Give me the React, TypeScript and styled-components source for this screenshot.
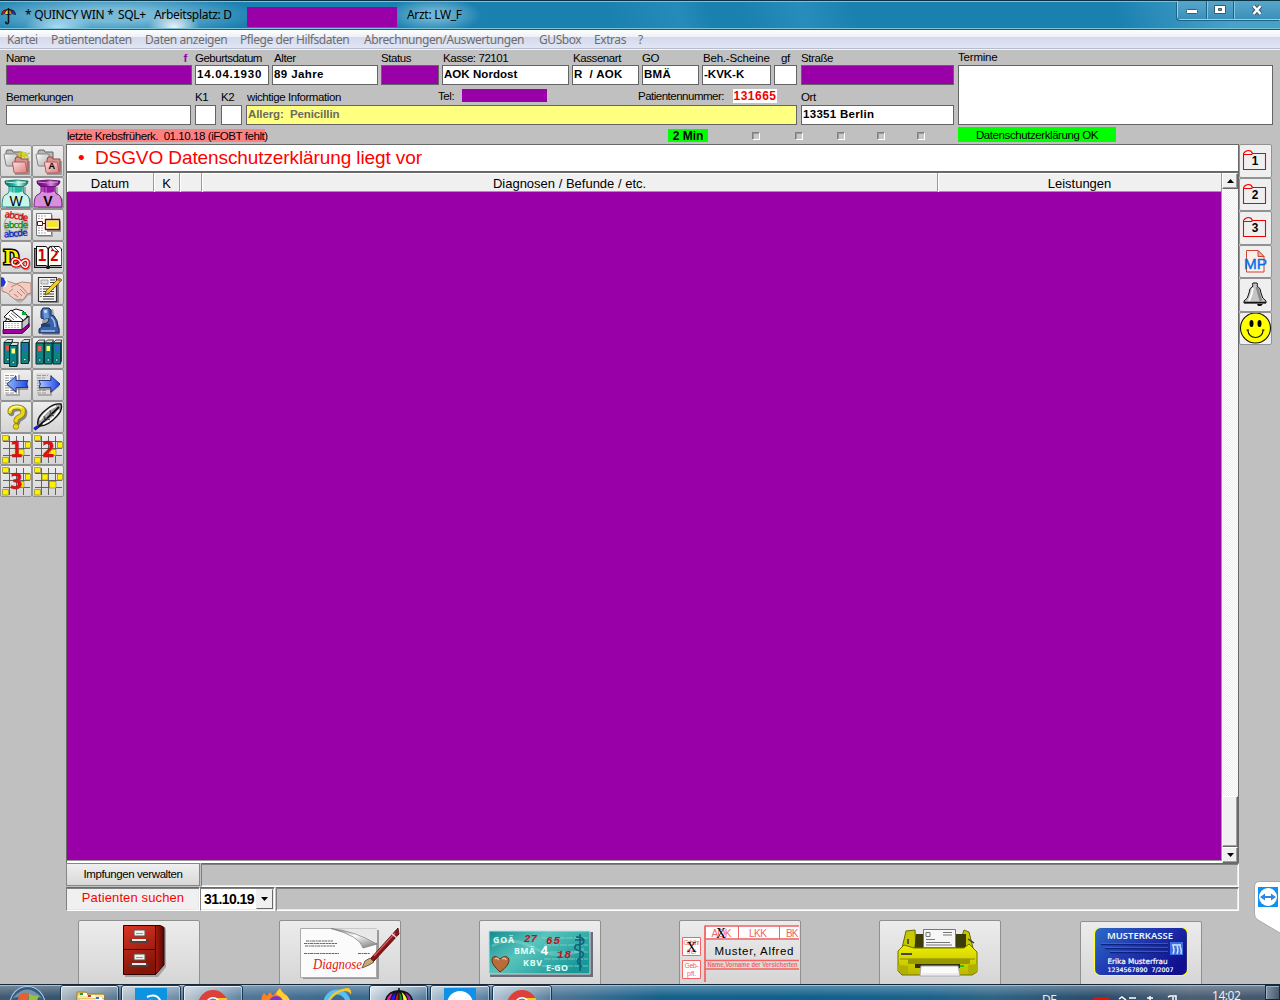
import React from "react";
import styled, { createGlobalStyle, css } from "styled-components";

const PURPLE = "#9900a8";
const SANS = `"Liberation Sans", Arial, sans-serif`;
const HUMAN = `"Noto Sans", "Open Sans", sans-serif`;

const Global = createGlobalStyle`
  *, *::before, *::after { box-sizing: border-box; }
  html, body { margin: 0; padding: 0; overflow: hidden; }
  body { font-family: ${SANS}; background: #c0c0c0; color: #000; }
  svg { display: block; }
`;

const Window = styled.div`
  position: relative;
  display: flex;
  flex-direction: column;
  width: 1280px;
  height: 1000px;
  overflow: hidden;
  background: #c0c0c0;
`;

/* ---------- title bar ---------- */
const TitleBar = styled.header`
  display: flex;
  align-items: flex-start;
  height: 30px;
  flex: none;
  border-top: 1px solid #0b3348;
  border-bottom: 1px solid #1c5a78;
  box-shadow: inset 0 1px 0 #7fc0dc, inset 0 -1px 0 #7cc3da;
  font: 12px/28px ${HUMAN};
  letter-spacing: -0.3px;
  background:
    radial-gradient(ellipse 26px 16px at 174px 26px, rgba(255,255,255,.9), rgba(255,255,255,0)),
    radial-gradient(ellipse 34px 16px at 58px 27px, rgba(190,235,255,.85), rgba(255,255,255,0)),
    radial-gradient(ellipse 150px 22px at 110px 14px, rgba(150,205,228,.75) 30%, rgba(150,205,228,0)),
    radial-gradient(ellipse 48px 18px at 434px 14px, rgba(150,205,228,.7) 20%, rgba(150,205,228,0)),
    linear-gradient(75deg, transparent 590px, rgba(60,160,205,.35) 660px, transparent 690px, transparent 720px, rgba(60,160,205,.4) 780px, transparent 830px, transparent 1080px, rgba(90,175,212,.7) 1190px),
    #1a80b0;
`;
const TitleText = styled.span<{ $w?: number }>`
  white-space: pre;
  width: ${(p) => (p.$w ? `${p.$w}px` : "auto")};
`;
const AppIcon = styled.div`
  width: 25px;
  padding: 6px 0 0 0;
`;
const TitleRedact = styled.div`
  width: 150px;
  height: 20px;
  margin: 6px 10px 0 0;
  background: ${PURPLE};
`;
const WindowButtons = styled.div`
  display: flex;
  margin-left: auto;
  height: 19px;
  border: 1px solid #9ad0e6;
  border-top: 0;
  border-right: 0;
  border-radius: 0 0 0 4px;
  box-shadow: -1px 1px 0 #1d6384;
`;
const WindowButton = styled.div<{ $w: number }>`
  display: flex;
  align-items: center;
  justify-content: center;
  width: ${(p) => p.$w}px;
  height: 18px;
  background: linear-gradient(#58a7ca, #3a90bb);
  & + & { border-left: 1px solid #1d6384; box-shadow: inset 1px 0 0 #86c3de; }
`;

/* ---------- menu ---------- */
const MenuBar = styled.nav`
  display: flex;
  flex: none;
  height: 20px;
  padding-left: 7px;
  border-bottom: 1px solid #f4f4f4;
  box-shadow: inset 0 -1px 0 #b6bccc;
  background: linear-gradient(#fff 0, #eef0f7 7px, #d3d9ec 7px, #e1e6f5 18px);
`;
const MenuItem = styled.span<{ $w: number }>`
  width: ${(p) => p.$w}px;
  font: 12px/20px ${HUMAN};
  letter-spacing: -0.43px;
  color: #6d6d6d;
  white-space: nowrap;
`;

/* ---------- patient header ---------- */
const PatientHeader = styled.section`
  display: flex;
  flex: none;
  height: 77px;
  padding-left: 6px;
`;
const PatientMain = styled.div`
  width: 952px;
`;
const FieldRow = styled.div<{ $gap: number }>`
  display: flex;
  gap: ${(p) => p.$gap}px;
`;
const FieldGroup = styled.div<{ $w: number; $ml?: number }>`
  width: ${(p) => p.$w}px;
  margin-left: ${(p) => p.$ml ?? 0}px;
`;
const Label = styled.div<{ $h?: number; $ls?: number; $pl?: number; $up?: number }>`
  display: flex;
  height: ${(p) => p.$h ?? 15}px;
  padding-left: ${(p) => p.$pl ?? 0}px;
  font-size: 11.5px;
  line-height: ${(p) => (p.$h ? p.$h + 4 : 16) - (p.$up ?? 0)}px;
  letter-spacing: ${(p) => p.$ls ?? -0.42}px;
  white-space: pre;
`;
const Sex = styled.b`
  margin-left: auto;
  padding-right: 5px;
  color: ${PURPLE};
`;
const Box = styled.div<{ $bg?: string; $h?: number; $ls?: number; $fg?: string }>`
  height: ${(p) => p.$h ?? 20}px;
  border: 1px solid #646464;
  padding-left: 1px;
  background: ${(p) => p.$bg ?? "#fff"};
  color: ${(p) => p.$fg ?? "#000"};
  font-size: 11.5px;
  font-weight: bold;
  line-height: 17px;
  letter-spacing: ${(p) => p.$ls ?? 0.3}px;
  white-space: pre;
`;
const PhoneRow = styled.div`
  display: flex;
  height: 20px;
  align-items: flex-start;
`;
const InlineRedact = styled.div`
  width: 85px;
  height: 13px;
  margin-top: 4px;
  background: ${PURPLE};
`;
const PatientNumber = styled.b`
  width: 44px;
  height: 14px;
  margin-top: 4px;
  background: #fff;
  color: #f00000;
  font-size: 12px;
  line-height: 14px;
  letter-spacing: 0.5px;
  text-align: center;
`;

/* ---------- status strip ---------- */
const StatusStrip = styled.section`
  display: flex;
  flex: none;
  height: 17px;
  padding-left: 67px;
`;
const Flag = styled.div<{ $w: number; $ml?: number; $h: number; $mt: number; $bg: string; $bold?: boolean; $ls?: number }>`
  width: ${(p) => p.$w}px;
  height: ${(p) => p.$h}px;
  margin: ${(p) => p.$mt}px 0 0 ${(p) => p.$ml ?? 0}px;
  background: ${(p) => p.$bg};
  font-size: ${(p) => (p.$bold ? 12 : 11.5)}px;
  font-weight: ${(p) => (p.$bold ? "bold" : "normal")};
  line-height: ${(p) => p.$h + 1}px;
  letter-spacing: ${(p) => p.$ls ?? 0}px;
  text-align: center;
  white-space: nowrap;
`;
const Checks = styled.div`
  display: flex;
  width: 250px;
  padding: 5px 0 0 44px;
`;
const Check = styled.i<{ $w: number }>`
  width: ${(p) => p.$w}px;
  &::before {
    content: "";
    display: block;
    width: 8px;
    height: 8px;
    border: 1px solid;
    border-color: #808080 #fff #fff #808080;
    box-shadow: inset 1px 1px 0 #9a9a9a;
    background: #c8c8c8;
  }
`;

/* ---------- workspace ---------- */
const Workspace = styled.main`
  display: flex;
  flex: none;
  height: 767px;
`;
const LeftTools = styled.aside`
  display: grid;
  grid-template-columns: 32px 32px;
  grid-auto-rows: 32px;
  align-content: start;
  width: 66px;
  padding-top: 1px;
`;
const Tool = styled.button<{ $right?: boolean }>`
  display: flex;
  align-items: center;
  justify-content: center;
  padding: 0;
  margin: 0;
  border: 1px solid #929292;
  border-radius: 2px;
  background: ${(p) => (p.$right ? "#efefef" : "linear-gradient(#ededed, #d5d5d5)")};
  overflow: hidden;
`;
const RightTools = styled.aside`
  display: grid;
  grid-template-columns: 33px;
  grid-auto-rows: 33.5px;
  align-content: start;
  width: 41px;
`;
const Center = styled.div`
  display: flex;
  flex-direction: column;
  width: 1173px;
`;
const Banner = styled.div`
  display: flex;
  flex: none;
  height: 29px;
  padding-left: 11px;
  border: 1px solid #696969;
  border-bottom-width: 2px;
  background: #fff;
  color: #f00;
  font-size: 19px;
  line-height: 25px;
  letter-spacing: -0.1px;
`;
const Bullet = styled.span`
  width: 17px;
`;
const TableFrame = styled.div`
  display: flex;
  flex: none;
  height: 690px;
  border-left: 1px solid #696969;
  border-right: 1px solid #696969;
`;
const Table = styled.div`
  display: flex;
  flex-direction: column;
  flex: 1;
`;
const HeadRow = styled.div`
  display: grid;
  grid-template-columns: 87px 26px 22px 736px 1fr;
  height: 19px;
  background: #f0f0f0;
  border-bottom: 1px solid #9a9a9a;
`;
const HeadCell = styled.div`
  border-right: 1px solid #9a9a9a;
  box-shadow: inset 1px 1px 0 #fff;
  font-size: 13px;
  line-height: 21px;
  text-align: center;
`;
const TableBody = styled.div`
  flex: 1;
  background: ${PURPLE};
  border-right: 1px solid #9a9a9a;
  border-bottom: 1px solid #9a9a9a;
`;
const TableFoot = styled.div`
  height: 2px;
  background: #fff;
`;
const ScrollBar = styled.div`
  display: flex;
  flex-direction: column;
  width: 16px;
  background: repeating-conic-gradient(#fff 0 25%, #ececec 0 50%) 0 0 / 2px 2px;
`;
const ScrollPiece = styled.div<{ $h: number; $mt?: string }>`
  display: flex;
  align-items: center;
  justify-content: center;
  height: ${(p) => p.$h}px;
  margin-top: ${(p) => p.$mt ?? 0};
  background: #f0f0f0;
  border: 1px solid;
  border-color: #fff #696969 #696969 #fff;
  box-shadow: inset -1px -1px 0 #a0a0a0;
`;
const FootRow = styled.div<{ $h: number }>`
  display: flex;
  flex: none;
  height: ${(p) => p.$h}px;
`;
const PlainButton = styled.button`
  width: 134px;
  height: 23px;
  padding: 0;
  border: 1px solid #868686;
  background: linear-gradient(#efefef, #d8d8d8);
  font: 11.5px/21px ${SANS};
  letter-spacing: -0.4px;
`;
const sunken = css`
  border: 1px solid;
  border-color: #696969 #fff #fff #808080;
  box-shadow: inset 0 1px 0 #808080, inset -1px -1px 0 #e8e8e8;
`;
const Well = styled.div`
  flex: 1;
  margin-left: 1px;
  background: #c0c0c0;
  ${sunken}
`;
const SearchCell = styled.div`
  width: 134px;
  background: #f0f0f0;
  color: #f00;
  font-size: 13px;
  line-height: 20px;
  letter-spacing: 0.12px;
  text-align: center;
  ${sunken}
`;
const DateCell = styled.div`
  display: flex;
  width: 75px;
  padding: 1px 1px 0 3px;
  background: #fff;
  font-size: 14px;
  font-weight: bold;
  line-height: 21px;
  letter-spacing: -0.55px;
  ${sunken}
`;
const DropArrow = styled.div`
  display: flex;
  align-items: center;
  justify-content: center;
  width: 17px;
  height: 20px;
  margin-left: auto;
  background: #f0f0f0;
  border: 1px solid;
  border-color: #eee #696969 #696969 #eee;
`;

/* ---------- picture buttons ---------- */
const PictureBar = styled.section`
  display: flex;
  flex: none;
  gap: 78px;
  height: 73px;
  padding: 9px 0 0 78px;
`;
const PictureButton = styled.button<{ $ml: number; $drop?: boolean }>`
  flex: none;
  width: 122px;
  height: 72px;
  padding: 0;
  margin: ${(p) => (p.$drop ? 1 : 0)}px 0 0 ${(p) => p.$ml}px;
  border: 1px solid #909090;
  border-radius: 2px;
  background: linear-gradient(#ececec, #d3d3d3);
  overflow: hidden;
`;

/* ---------- taskbar ---------- */
const TaskBar = styled.footer`
  position: relative;
  display: flex;
  flex: none;
  height: 16px;
  overflow: hidden;
  border-top: 1px solid #16293c;
  box-shadow: inset 0 1px 0 #a9bccd;
  background:
    linear-gradient(rgba(255,255,255,.3), rgba(255,255,255,0) 12px),
    linear-gradient(90deg, #405a72 0, #34556f 60px, #60819e 180px, #3a6a90 330px, #4c7596 560px, #15608a 660px, #10608c 800px, #1a628b 930px, #2f6485 990px, #2a4c6a 1100px, #4c5f75 1190px, #40566c 1280px);
`;
const StartSlot = styled.div`
  width: 60px;
  padding-left: 9px;
`;
const TaskButton = styled.div<{ $w: number; $flat?: boolean; $active?: boolean }>`
  display: flex;
  justify-content: center;
  width: ${(p) => p.$w}px;
  height: 24px;
  margin-right: 2px;
  ${(p) =>
    !p.$flat &&
    css`
      border: 1px solid #1c3850;
      border-radius: 3px;
      box-shadow: inset 0 1px 0 #e8f0f6, inset 1px 0 0 rgba(255, 255, 255, 0.6), inset -1px 0 0 rgba(255, 255, 255, 0.4);
      background: linear-gradient(125deg, rgba(255, 255, 255, ${p.$active ? 0.8 : 0.65}), rgba(200, 220, 235, 0.12) 90%);
    `}
`;
const Tray = styled.div`
  display: flex;
  margin-left: auto;
  color: #e8f0f6;
  font: 12px/14px ${HUMAN};
`;
const TrayText = styled.span<{ $mt: number; $w: number }>`
  width: ${(p) => p.$w}px;
  margin-top: ${(p) => p.$mt}px;
  letter-spacing: -0.45px;
`;
const ShowDesktop = styled.div`
  width: 15px;
  border: 1px solid #17293b;
  box-shadow: inset 1px 1px 0 #9fb1c2;
  background: linear-gradient(100deg, #8696a6, #44586c);
`;

/* remote-support tab that lies over the right screen edge */
const SupportTab = styled.div`
  position: absolute;
  right: 0;
  top: 881px;
`;

/* ---------- drawings ---------- */
const Svg = ({ w, h, children }: { w: number; h: number; children: React.ReactNode }) => (
  <svg width={w} height={h} viewBox={`0 0 ${w} ${h}`}>{children}</svg>
);

const Umbrella = () => (
  <svg width={17} height={18} viewBox="0 0 16 18">
    <path d="M.5 8Q1 2 8 2Q15 2 15.500 8L12 7 8 8 4 7Z" fill="#111" />
    <path d="M1.500 7Q2 3.500 5.500 3Q4 5 4 7Z" fill="#d01818" />
    <path d="M4.500 7Q5 3.500 7.500 3V7Z" fill="#f0e020" />
    <path d="M8.400 3Q11 3.500 11.200 7H8.400Z" fill="#e87810" />
    <path d="M10 3Q14.500 4 14.600 7H12Q12 4.500 10 3Z" fill="#2830d0" />
    <path d="M8 1V15Q7.800 17 6 16.500Q5 16 5.200 14.500" fill="none" stroke="#151515" strokeWidth="1.600" />
  </svg>
);

const Folders = ({ tag, yellow }: { tag: string; yellow?: boolean }) => (
  <Svg w={30} h={30}>
    <defs>
      <linearGradient id={`fg${tag}`} x2="1" y2="1"><stop offset="0" stopColor="#fff" /><stop offset="1" stopColor="#a8a8a8" /></linearGradient>
      <linearGradient id={`fr${tag}`} x2="1" y2="1"><stop offset="0" stopColor="#fde0e0" /><stop offset="1" stopColor="#dc7c7c" /></linearGradient>
    </defs>
    <path d="M5 6l1-2h5l1 2h8v13H6z" fill="#b8b8b8" stroke="#666" />
    <path d="M3 9q0-1 1-1h11q1 0 1 1l1 10q0 1-1 1H6q-1 0-1-1z" fill={`url(#fg${tag})`} stroke="#808080" />
    <path d="M14 28h14V15" stroke="#888" fill="none" strokeWidth="1.500" />
    <path d="M14 14l1-3h4l1 2h7v13H15z" fill="#d89090" stroke="#984848" />
    <path d="M11.500 17q0-1 1-1h11q1 0 1 1l1.500 9q0 1-1 1H14q-1 0-1-1z" fill={`url(#fr${tag})`} stroke="#b05858" />
    {yellow ? (
      <text x="17" y="10.500" fontSize="8" fontWeight="bold" fontFamily="Liberation Sans" fill="#eeee10" stroke="#8a8a00" strokeWidth=".3" transform="rotate(10 17 10)">{tag}</text>
    ) : (
      <text x="15.500" y="22.500" fontSize="9" fontWeight="bold" fontFamily="Liberation Sans">{tag}</text>
    )}
  </Svg>
);

const Flask = ({ c, dark, light, letter }: { c: string; dark: string; light: string; letter: string }) => (
  <Svg w={30} h={30}>
    <defs>
      <linearGradient id={`lip${letter}`}><stop offset="0" stopColor={dark} /><stop offset=".4" stopColor={c} /><stop offset=".6" stopColor={light} /><stop offset="1" stopColor={dark} /></linearGradient>
    </defs>
    <path d="M8 9L25 9V16L30 21V30H5V20L9 16Z" fill="#666" opacity=".5" />
    <path d="M8 8H22V13Q22 16 26 17Q29 19 29 29H1Q1 19 4 17Q8 16 8 13Z" fill={light} stroke={dark} strokeWidth=".8" />
    <path d="M8.500 8H21.500V13.500Q15 16 8.500 13.500Z" fill={c} />
    <path d="M4 3Q15 1 27 3Q27 7 22 8.500H8Q3 6 4 3Z" fill={`url(#lip${letter})`} stroke={dark} strokeWidth=".8" />
    <path d="M5 4Q15 6 25 4" fill="none" stroke={light} />
    <path d="M10 9v5M13 9v6" stroke={light} opacity=".7" />
    <text x="15" y="27.500" textAnchor="middle" fontSize={14} fontWeight={letter === "W" ? "normal" : "bold"} fontFamily="Liberation Sans">{letter}</text>
  </Svg>
);

const Abc = () => (
  <Svg w={30} h={30}>
    <circle cx="15" cy="15" r="12.500" fill="#b4b4ac" />
    <circle cx="13" cy="13" r="8.500" fill="#dcdcd6" />
    <g fontFamily="DejaVu Sans" fontSize="9" textAnchor="middle" strokeWidth=".25">
      <text x="15" y="9" fill="#d00000" stroke="#d00000" textLength="24" transform="rotate(10 15 9)">abcde</text>
      <text x="15" y="17.500" fill="#009000" stroke="#009000" textLength="24">abcde</text>
      <text x="15" y="26.500" fill="#0020c8" stroke="#0020c8" textLength="24" transform="rotate(-5 15 27)">abcde</text>
    </g>
  </Svg>
);

const FormLink = () => (
  <Svg w={30} h={30}>
    <path d="M5 5h15v22H5z" fill="#888" opacity=".6" />
    <path d="M3.500 3.500h15v22h-15z" fill="#fff" stroke="#777" />
    <path d="M5 6h8M5 8.500h5M5 18h7M5 20.500h6M5 23h8M12 18h3" stroke="#aaa" strokeDasharray="2 1" />
    <path d="M4.500 11.500h5v4h-5z" fill="#fff" stroke="#800000" />
    <path d="M9.500 13.500h3" stroke="#800000" />
    <path d="M14 11h14v11H14z" fill="#999" />
    <path d="M12.500 9.500h14v10h-14z" fill="#ffffc0" stroke="#700000" strokeWidth="1.300" />
    <path d="M14 11h11v6H14z" fill="#f4e820" />
  </Svg>
);

const DInf = () => (
  <Svg w={30} h={30}>
    <text x="3" y="21.500" fontSize="21" fontWeight="bold" fontFamily="Liberation Serif" fill="#fff000" stroke="#000" strokeWidth="3" paintOrder="stroke">D</text>
    <g fill="none" transform="rotate(8 20 21)">
      <path d="M20 21C17 16 11 17 11 21S17 26 20 21S27 16 27 21S23 26 20 21Z" stroke="#777" strokeWidth="4" transform="translate(1 1)" opacity=".6" />
      <path d="M20 21C17 16 11 17 11 21S17 26 20 21S27 16 27 21S23 26 20 21Z" stroke="#e00000" strokeWidth="3.600" />
      <path d="M20 21C17 16 11 17 11 21S17 26 20 21S27 16 27 21S23 26 20 21Z" stroke="#fff" strokeWidth="1.500" />
    </g>
  </Svg>
);

const Book = () => (
  <Svg w={30} h={30}>
    <path d="M1 6h2V4h10l2 2 2-2h9l3 3v19H17l-1 1h-2l-1-1H1z" fill="#111" />
    <path d="M4 5H13l1.500 2v17L13 23H4zM16 7l1.500-2H26l2 2v16H17.500L16 24z" fill="#fff" />
    <path d="M2.300 7v17.500h11M29 9v15.500H17" stroke="#ccc" fill="none" strokeWidth=".8" />
    <text x="4.500" y="18.500" fontSize="15" fontWeight="bold" fontFamily="DejaVu Sans Mono" fill="#d00000">1</text>
    <text x="17" y="18.500" fontSize="15" fontWeight="bold" fontFamily="DejaVu Sans Mono" fill="#d00000">2</text>
    <path d="M20 4l6 6-5-1-3-4z" fill="#fff" stroke="#111" strokeWidth=".8" />
  </Svg>
);

const Handshake = () => (
  <Svg w={30} h={30}>
    <path d="M1 17l4-1 10 10q4 2 7-2l5-5 3 1v-9H4z" fill="#777" opacity=".4" transform="translate(1 2)" />
    <path d="M1 8l5-1 9 3 6-2 9 1v10l-4 1-3 5q-2 2-4 0-2 2-4 0-2 1-4-2-2 0-3-3l-4-2-3-1z" fill="#f2cdc4" stroke="#a27468" strokeWidth=".8" />
    <path d="M10 13l6-3 5 3 5 6M13 20l4 3M16 17l5 5M19 15l5 5M8 18l4-3" stroke="#b58276" fill="none" />
    <path d="M0 3l3 1 2 4-2 4-3 1z" fill="#2038d0" />
    <path d="M4 5l2 3-2 5" fill="none" stroke="#fff" strokeWidth="1.500" />
  </Svg>
);

const Notes = () => (
  <Svg w={30} h={30}>
    <path d="M25 6v22H7" fill="none" stroke="#888" strokeWidth="2" />
    <path d="M5.500 3.500h18v24h-18z" fill="#f4f4f4" stroke="#333" strokeWidth="1.200" />
    <path d="M8 6h7v4H8z" fill="#ddd" stroke="#888" strokeWidth=".7" />
    <path d="M17 6h5M17 8.500h5M10 12.500h11M10 15h11M10 17.500h11M10 20h11M10 22.500h11M10 25h11" stroke="#444" />
    <path d="M7.500 12.500h1M7.500 15h1M7.500 17.500h1M7.500 20h1M7.500 22.500h1" stroke="#111" />
    <path d="M26 4l3 2-13 13-4 2 1-4z" fill="#f0d020" stroke="#554400" strokeWidth=".8" />
    <path d="M26 4l3 2-2 2-3-2z" fill="#b08040" />
  </Svg>
);

const CardBox = () => (
  <Svg w={30} h={30}>
    <path d="M4 16L10 5l5-2 7 2 4 4v9z" fill="#fff" stroke="#111" />
    <path d="M3 11l7-7 12 10-4 5z" fill="#fff" stroke="#111" />
    <path d="M8 9l5 5M10 7l6 5M7 12l4 3" stroke="#777" />
    <path d="M21 6h4v3h-4z" fill="#00b030" />
    <path d="M2.500 15.500H21L27 10v12l-6 5H2.500z" fill="#fff" stroke="#111" />
    <path d="M21 16v11l7-6V10z" fill="#c8c8c8" stroke="#111" />
    <path d="M2 23.500h19l7-6v3.500l-7 6.500H2z" fill="#a000a0" stroke="#300030" strokeWidth=".8" />
    <path d="M5 17v5M8 17v5M11 17v5M14 17v5M17 17v5" stroke="#888" strokeDasharray="1 1" />
  </Svg>
);

const Microscope = () => (
  <Svg w={30} h={30}>
    <path d="M11 4l8-2 2 10q5 6 5 12v4H8l3-7-3-6z" fill="#555" opacity=".45" transform="translate(1 1)" />
    <path d="M8 5l2-3h6l2 2v5l3 1q4 4 4 11l1 2v4H6v-4l3-2v-3l5-1 2-3-1-2-4 1-3-1z" fill="#3a62a8" stroke="#172d58" />
    <path d="M10 3h5l1 9-5 1z" fill="#6a96d8" />
    <path d="M18 11q4 3 4 10M8 25h14" stroke="#9fc0ee" fill="none" strokeWidth="1.500" />
    <path d="M8 18h9v3H8z" fill="#223f78" />
    <circle cx="12.500" cy="5.500" r="1.500" fill="#cfe0ff" />
  </Svg>
);

const Binder = ({ x, y = 5, tag }: { x: number; y?: number; tag: string }) => (
  <g transform={`translate(${x} ${y})`}>
    <path d="M0 3L3 0H9L7.500 3z" fill="#ddd" stroke="#222" strokeWidth=".8" />
    <path d="M0 3h7.500v21H0z" fill="#0c8484" stroke="#012c2c" />
    <path d="M7.500 3L9 0v21l-1.500 3z" fill="#045454" />
    <path d="M2 6h3.500v5H2z" fill={tag} />
    <circle cx="3.800" cy="20" r="1.300" fill="#c8e8e8" stroke="#012c2c" strokeWidth=".6" />
  </g>
);
const BindersOut = () => (
  <Svg w={30} h={30}>
    <Binder x={3} y={1.500} tag="#e85050" /><Binder x={20} y={1.500} tag="#3858e0" /><Binder x={8.500} y={4.500} tag="#ffff80" />
  </Svg>
);
const Binders = () => (
  <Svg w={30} h={30}>
    <Binder x={3} y={2} tag="#f06060" /><Binder x={11.500} y={2} tag="#ffff60" /><Binder x={20} y={2} tag="#3858e0" />
  </Svg>
);

const PageArrow = ({ right }: { right?: boolean }) => (
  <Svg w={30} h={30}>
    <path d="M5 5h14v21H5z" fill="#aaa" />
    <path d="M3 3h14v21H3z" fill={right ? "#dcdcdc" : "#fafafa"} />
    <path d="M4 5.500h11M4 8h8M4 10.500h11M4 13h6M4 15.500h10M4 18h5M4 20.500h10M4 23h9" stroke="#999" strokeDasharray="4 1" />
    <defs>
      <linearGradient id={right ? "ar" : "al"} x1="1" x2="0">
        <stop offset="0" stopColor={right ? "#b0ccf8" : "#2048e8"} />
        <stop offset="1" stopColor={right ? "#1840f0" : "#90b8f8"} />
      </linearGradient>
    </defs>
    <g transform={right ? "translate(33 0) scale(-1 1)" : ""}>
      <path d="M6 14L16 6v5H27v7H16v4z" fill="#555" opacity=".5" transform="translate(0 2)" />
      <path d="M6 14L15 6v4.500H27L25.500 14l1.500 3.500H15V22z" fill={`url(#${right ? "ar" : "al"})`} stroke="#182c80" strokeWidth=".9" />
    </g>
  </Svg>
);

const Question = () => (
  <Svg w={30} h={30}>
    <g fill="none" strokeLinecap="round">
      <path d="M9 10Q9 5 16 5T22 10Q22 13 18 15Q15 16.500 15 19" stroke="#888" strokeWidth="5.500" transform="translate(1.500 1.500)" />
      <path d="M9 10Q9 5 16 5T22 10Q22 13 18 15Q15 16.500 15 19" stroke="#8a7c00" strokeWidth="5" />
      <path d="M9 10Q9 5 16 5T22 10Q22 13 18 15Q15 16.500 15 19" stroke="#e8d818" strokeWidth="3.600" />
      <path d="M9 8.500Q11 4.500 16 4.500T20 6" stroke="#ffff98" strokeWidth="1.300" />
    </g>
    <circle cx="15" cy="24.500" r="2.800" fill="#e8d818" stroke="#8a7c00" strokeWidth=".8" />
  </Svg>
);

const Feather = () => (
  <Svg w={30} h={30}>
    <path d="M5 23Q3 15 14 7Q21 1 28 2Q30 8 24 14Q15 24 7 24L2 28" fill="#a8a8a8" stroke="#111" strokeWidth="1.400" />
    <path d="M5 25L26 5" stroke="#111" strokeWidth="1.800" />
    <path d="M7 18Q13 8 23 4M10 22Q20 18 26 8" stroke="#fff" fill="none" strokeWidth="1.800" />
    <path d="M12 16l5 2M16 12l5 2M12 19l-1-5M18 13l-1-5" stroke="#444" />
    <path d="M1 27l4-3" stroke="#1020e0" strokeWidth="2.500" />
  </Svg>
);

const Grid = ({ n }: { n?: string }) => (
  <Svg w={30} h={30}>
    <path d="M2 7.500h27M2 14.500h27M2 21.500h27M8.500 2v27M15.500 2v27M22.500 2v27" stroke="#555" strokeWidth=".9" />
    <g fill="#fff000" stroke="#8a8a40" strokeWidth=".7">
      <path d="M1.500 1.500h6v5h-6zM24.500 8h5v6h-5zM1.500 23.500h6v5.500h-6z" />
      {n ? <path d="M17 15.500h6v6h-6z" /> : <path d="M9 8h6v6H9zM16.500 15.500h6.500v6.500h-6.500z" />}
    </g>
    {n && <text x="15.500" y="22.500" textAnchor="middle" fontSize="21" fontWeight="bold" fontFamily="DejaVu Sans, Noto Sans" fill="#e01010" stroke="#902020" strokeWidth=".3" textLength="13" lengthAdjust="spacingAndGlyphs">{n}</text>}
  </Svg>
);

const NumFolder = ({ n }: { n: string }) => (
  <Svg w={31} h={31}>
    <path d="M3.500 8.500V24.500H25.500V8.500H12.500Q11.500 5.500 8.500 5.500T3.500 8.500M3.500 9.500H11.500L12.500 8.500" fill="none" stroke="#f00000" strokeWidth="1.100" />
    <text x="15" y="20" textAnchor="middle" fontSize="13.500" fontWeight="bold" fontFamily="Liberation Sans" textLength="6.600" lengthAdjust="spacingAndGlyphs">{n}</text>
  </Svg>
);
const MpDoc = () => (
  <Svg w={31} h={31}>
    <path d="M6.500 4.500H18l6 6V26H6.500z" fill="#fdeeea" stroke="#c84830" />
    <path d="M18 4.500v6h6z" fill="#f0b0a0" stroke="#c84830" />
    <text x="4" y="22.500" fontSize="15.500" fontFamily="Liberation Sans" fill="#0070e8" stroke="#0070e8" strokeWidth=".4" textLength="23" lengthAdjust="spacingAndGlyphs">MP</text>
  </Svg>
);
const Bell = () => (
  <Svg w={31} h={31}>
    <path d="M13 7q-1-2 0-3h4q1 1 0 3 4 2 4 7 1 6 5 8v2H4v-2q4-2 5-8 0-5 4-7z" fill="#c4c4c4" stroke="#111" />
    <path d="M13 9q-1 7-4 13" stroke="#fff" strokeWidth="1.800" fill="none" />
    <path d="M17 8q2 8 4 14" stroke="#888" strokeWidth="2.500" fill="none" />
    <path d="M4 23.500h22" stroke="#111" strokeWidth="1.300" />
    <path d="M17 25h6l-2 2h-3z" fill="#111" />
  </Svg>
);
const Smiley = () => (
  <Svg w={31} h={32}>
    <circle cx="15.500" cy="16" r="15" fill="#ffff00" stroke="#111" strokeWidth="1.100" />
    <ellipse cx="11.500" cy="11.500" rx="2" ry="3.500" /><ellipse cx="19.500" cy="11.500" rx="2" ry="3.500" />
    <path d="M6.500 18h2.500M22 18h2.500M7.800 18.500Q9 25.500 15.500 25.500T23.200 18.500" fill="none" stroke="#111" strokeWidth="1.200" />
  </Svg>
);

/* picture button drawings, 120x70 canvas */
const Cabinet = () => (
  <Svg w={120} h={70}>
    <defs>
      <linearGradient id="cab" x2=".3" y2="1"><stop offset="0" stopColor="#dc3424" /><stop offset="1" stopColor="#841408" /></linearGradient>
      <linearGradient id="cabs"><stop offset="0" stopColor="#a81c10" /><stop offset="1" stopColor="#500804" /></linearGradient>
    </defs>
    <path d="M46 6h40l1 3v37L79 56H46z" fill="#777" opacity=".55" />
    <path d="M44.500 4.500h32v49h-32z" fill="url(#cab)" stroke="#300" />
    <path d="M76.500 4.500h5l3.500 2V44l-8.500 9.500z" fill="url(#cabs)" stroke="#300" />
    <path d="M44 28.500h33" stroke="#300" />
    {[9, 33].map((y) => (
      <g key={y}>
        <path d={`M55 ${y}h11v6H55z`} fill="#f4f0ec" stroke="#555" />
        <path d={`M57 ${y + 3.500}h7`} stroke="#999" />
        <path d={`M52 ${y + 11}h16`} stroke="#444" strokeWidth="3.500" strokeLinecap="round" />
        <path d={`M53 ${y + 10}h14`} stroke="#eee" strokeWidth="2" />
      </g>
    ))}
  </Svg>
);
const Diagnose = () => (
  <Svg w={120} h={70}>
    <defs><linearGradient id="curl" x2=".6" y2="1"><stop offset="0" stopColor="#777" /><stop offset=".5" stopColor="#fff" /><stop offset="1" stopColor="#999" /></linearGradient></defs>
    <path d="M23 9h76v49H23z" fill="#888" opacity=".8" />
    <path d="M20.500 7.500h76v49h-76z" fill="#fbfbfb" stroke="#aaa" />
    <path d="M51 7.500Q78 10 97 22v-14.500z" fill="#e8e8e8" />
    <path d="M51 7.500Q75 10 97 23L83 27Q80 15 51 7.500z" fill="url(#curl)" stroke="#777" strokeWidth=".7" />
    <g stroke="#666" strokeWidth="1" strokeDasharray="3 .6 2 .5">
      <path d="M26 20h27M24 22.500h33M25 25h30M24 32.500h35M78 32.500h12" />
    </g>
    <text x="33" y="48" fontFamily="Liberation Serif" fontStyle="italic" fontSize="15.500" fill="#e01818" textLength="49" lengthAdjust="spacingAndGlyphs">Diagnose</text>
    <path d="M118 7l1 6-25 27-5 3 2-6z" fill="#8c1418" stroke="#400" strokeWidth=".8" />
    <path d="M115 12L94 35" stroke="#d46060" strokeWidth="1.200" />
    <path d="M82 47l3-7 5-3 4 4-5 3z" fill="#c8a878" stroke="#5a4028" strokeWidth=".8" />
    <path d="M111 12l6 5" stroke="#ddd" strokeWidth="1.500" />
  </Svg>
);
const FeeCatalog = () => (
  <Svg w={120} h={70}>
    <defs>
      <linearGradient id="fee" x2="1" y2=".6"><stop offset="0" stopColor="#128c90" /><stop offset=".45" stopColor="#58c4bc" /><stop offset="1" stopColor="#189898" /></linearGradient>
    </defs>
    <path d="M10 11h103v45H10z" fill="#6c6c78" />
    <path d="M9 10h101v43H9z" fill="url(#fee)" stroke="#bde0e0" />
    <path d="M62 17h46M64 24h44M62 31h46M64 38h44M62 45h46" stroke="#8cdcd4" opacity=".7" strokeDasharray="7 1" />
    <path d="M12 25Q30 14 54 27T104 28" stroke="#a8e4dc" strokeWidth="3" opacity=".3" fill="none" />
    <g fontFamily="Noto Sans, Open Sans" fontWeight="700" fontSize="8.800" fill="#e0fff4">
      <text x="13" y="21.500" textLength="21">GOÄ</text><text x="34" y="32.500" textLength="21">BMÄ</text>
      <text x="43" y="44.500" textLength="19">KBV</text><text x="66" y="49.500" textLength="22">E-GO</text>
    </g>
    <g fontFamily="Liberation Mono" fontWeight="bold" fontStyle="italic" fontSize="11" fill="#c01020">
      <text x="44" y="21" textLength="13">27</text><text x="66" y="23" textLength="14">65</text><text x="77" y="37" textLength="14">18</text>
    </g>
    <text x="60.500" y="34" fontSize="13" fontWeight="bold" fontFamily="Liberation Mono" fill="#fff">4</text>
    <path d="M20 51Q11 43 12 38Q14 33 20 38Q26 33 29 38Q30 44 20 51Z" fill="#b86c3c" stroke="#683010" />
    <path d="M15 38q2-2 4 1M22 38q3-2 4 1" stroke="#f0b888" fill="none" strokeWidth="1.500" />
    <path d="M100 13V50M96 16q8 0 8 4t-8 4q-4 4 4 6 6 2 2 6-6 2-4 6l4 4M95 19h9" stroke="#106078" fill="none" strokeWidth="1.600" />
  </Svg>
);
const Form = () => (
  <Svg w={120} h={70}>
    <path d="M26 6h32v11H26zM59 6h40v11H59zM100 6h19v11H100z" fill="#fff" />
    <path d="M25 5h94M25 18h94M25 39.500h94M25 48h94" stroke="#f46464" strokeWidth="1.500" />
    <path d="M25 4.500V61" stroke="#f46464" strokeWidth="1.800" />
    <path d="M58.500 5v13M99.500 5v13" stroke="#f46464" />
    <path d="M2.500 16.500h18v18h-18zM2.500 39.500h18v18h-18z" fill="#fff" stroke="#f46464" />
    <g fontFamily="Liberation Sans" fill="#f46464" fontSize="10">
      <text x="31.500" y="15.500" textLength="20">AOK</text><text x="69" y="15.500" textLength="18">LKK</text><text x="106" y="15.500" textLength="12.500">BK</text>
      <text x="3.500" y="23.500" fontSize="6.500" textLength="16">Gebühr</text><text x="7" y="32.500" fontSize="6.500">frei</text>
      <text x="4.500" y="47" fontSize="7" textLength="14">Geb-</text><text x="7" y="55" fontSize="7">pfl.</text>
      <text x="27.500" y="46" fontSize="6.500" fontWeight="bold" textLength="90" lengthAdjust="spacingAndGlyphs">Name,Vorname der Versicherten</text>
    </g>
    <g fontFamily="Liberation Serif" fontSize="14"><text x="36" y="16.500">X</text><text x="6.500" y="30.500">X</text></g>
    <text x="34.500" y="34" fontFamily="Liberation Sans" fontSize="11.500" textLength="79">Muster, Alfred</text>
  </Svg>
);
const Printer = () => (
  <Svg w={120} h={70}>
    <defs><linearGradient id="prn" x2="0" y2="1"><stop offset="0" stopColor="#f0f000" /><stop offset="1" stopColor="#b8b800" /></linearGradient></defs>
    <path d="M26 10l9-1 1 18H22zM84 9l5 2 4 16H78z" fill="#c8c800" stroke="#686800" />
    <path d="M36 13h50v18H34z" fill="#3c3c08" />
    <path d="M18 30l6-6 10 3h50l5-4 8 8v20l-5 3H22l-4-4z" fill="url(#prn)" stroke="#707000" />
    <path d="M20 38h75" stroke="#888800" /><path d="M28 38h62v5H28z" fill="#989800" />
    <path d="M35 43h45v4H35z" fill="#333300" /><path d="M80 44h4v2h-4z" fill="#20c020" />
    <path d="M18 44l10 1v8H22l-4-3zM88 44l9-1v8l-5 2h-4z" fill="#b0b000" />
    <path d="M21 33h11" stroke="#444" strokeWidth="2" />
    <path d="M43.500 8.500h32v18h-32z" fill="#f6f6f6" stroke="#777" />
    <path d="M46 11.500h4v4h-4zM63 11.500h9M63 14h9M46 18.500h9M46 21.500h24M46 24h26" stroke="#777" fill="none" />
    <path d="M41 45h37l2 10H40z" fill="#fafafa" stroke="#aaa" />
    <path d="M42 53h37" stroke="#ddd" />
    <path d="M28 18v5M88 18l6 4" stroke="#333" strokeWidth="1.500" />
  </Svg>
);
const InsuranceCard = () => (
  <Svg w={120} h={70}>
    <defs><linearGradient id="card" x2="1" y2=".6"><stop offset="0" stopColor="#2c6cc8" /><stop offset=".5" stopColor="#2038b0" /><stop offset="1" stopColor="#101090" /></linearGradient></defs>
    <rect x="13.500" y="5.500" width="93" height="48" rx="6" fill="url(#card)" stroke="#ffff30" strokeWidth="1.200" />
    <text x="26" y="17" fontFamily="Noto Sans, Open Sans" fontSize="9.500" fontWeight="600" fill="#e8f8ff" textLength="66" lengthAdjust="spacingAndGlyphs">MUSTERKASSE</text>
    <path d="M20 22.500h67M24 26.500h63M29 30.500h58" stroke="#0c2080" strokeWidth="1.500" />
    <path d="M20 21.500h67M24 25.500h63M29 29.500h58" stroke="#5088e0" strokeWidth=".5" />
    <path d="M89 20h13v13H89z" fill="#4070e0" />
    <path d="M91 23h9M92 24q2 4 0 8M96 24q2 4 0 8M99 24q2 4 1 8" stroke="#d8ecff" fill="none" strokeWidth="1.300" />
    <text x="26.500" y="42" fontFamily="DejaVu Sans, Noto Sans" fontSize="7.500" fill="#fff" stroke="#fff" strokeWidth=".2" textLength="60" lengthAdjust="spacingAndGlyphs">Erika Musterfrau</text>
    <text x="26.500" y="50" fontFamily="DejaVu Sans, Noto Sans" fontSize="6.200" fill="#fff" stroke="#fff" strokeWidth=".2" textLength="66" lengthAdjust="spacingAndGlyphs" xmlSpace="preserve">1234567890  7/2007</text>
  </Svg>
);

/* taskbar drawings */
const StartOrb = () => (
  <Svg w={38} h={30}>
    <circle cx="18.500" cy="19" r="17.500" fill="#345c80" stroke="#a8c8dc" strokeWidth="1.200" />
    <path d="M4 13Q18-4 33 13Q18 9 4 13Z" fill="#a0b8cc" opacity=".6" />
    <path d="M10 10q5-4 10-1l-2 9H8z" fill="#e86030" /><path d="M20 9q6 3 10 1l-3 9h-8z" fill="#98c040" />
  </Svg>
);
const Explorer = () => (
  <Svg w={36} h={22}>
    <path d="M5 6h9l1 2h17v15H4z" fill="#e8c868" stroke="#9c7828" strokeWidth=".8" />
    <path d="M6 9h26v3H6zM8 13h24v8H8z" fill="#f8e8a0" />
    <path d="M9 7h6v3H9zM17 9h6v3h-6zM24 11h6v3h-6z" fill="#fff" />
    <path d="M8 7h3v2H8z" fill="#20a020" /><path d="M16 9h3v2h-3z" fill="#d03030" /><path d="M24 11h3v2h-3z" fill="#3070e0" />
  </Svg>
);
const BlueApp = () => (
  <Svg w={32} h={22}>
    <path d="M0 2h32v22H0z" fill="#0c94e0" />
    <path d="M12 11q9-4 13 3v8M14 15q6-1 6 6" fill="none" stroke="#fff" strokeWidth="2" />
  </Svg>
);
const Chrome = () => (
  <Svg w={32} h={22}>
    <circle cx="16" cy="19" r="15" fill="#dc4038" />
    <path d="M1 14l7-1 6 7-5 10H0z" fill="#30a050" /><path d="M18 12h11.500q3 6 0 14H20z" fill="#f8c820" />
    <circle cx="16" cy="18.500" r="7.500" fill="#fff" /><circle cx="16" cy="18.500" r="6" fill="#3c80e8" />
  </Svg>
);
const Firefox = () => (
  <Svg w={34} h={22}>
    <path d="M3 20Q1 12 5 8l3 3 3-4 3 4Q18 6 21 3q1 3 6 7 6 5 4 15H3z" fill="#ff8020" />
    <path d="M17 9Q18 6 21 3q1 4 6 7 6 5 4 13h-6Q26 13 17 9z" fill="#ffd030" />
    <circle cx="17" cy="18" r="7" fill="#7838c8" />
  </Svg>
);
const Ie = () => (
  <Svg w={34} h={22}>
    <circle cx="16" cy="18" r="11" fill="none" stroke="#58c0f0" strokeWidth="5" />
    <path d="M4 22Q9 5 26 3q5 0 4 7Q29 6 23 6 11 9 6 22" fill="#f8c828" />
  </Svg>
);
const BigUmbrella = () => (
  <Svg w={32} h={22}>
    <path d="M1 18Q3 4 16 4t15 14z" fill="#111" />
    <path d="M3 17Q4 9 10 7Q7 11 6.500 17Z" fill="#e020a0" />
    <path d="M7.500 17Q8 10 13 6Q11.500 11 11.500 17Z" fill="#1020f0" />
    <path d="M12.500 17Q12.500 10 15.300 6V17Z" fill="#e01010" />
    <path d="M16.500 6Q19.500 10 19.500 17H16.500Z" fill="#109020" />
    <path d="M18.500 6Q24 10 24.500 17H20.500Q20.500 10 18.500 6Z" fill="#ffff20" />
    <path d="M22 7Q28 9 29 17H25.500Q25 11 22 7Z" fill="#a020a8" />
    <path d="M16 2v4" stroke="#111" strokeWidth="1.500" />
  </Svg>
);
const RemoteApp = () => (
  <Svg w={32} h={22}>
    <path d="M0 2h32v22H0z" fill="#1090e8" /><circle cx="16" cy="18" r="13" fill="#fff" />
  </Svg>
);

const Arrow = ({ down }: { down?: boolean }) => (
  <Svg w={7} h={4}><path d={down ? "M0 0h7L3.500 4z" : "M0 4h7L3.500 0z"} /></Svg>
);

const leftTools = [
  <Folders tag="BK" yellow />, <Folders tag="A" />,
  <Flask c="#20b8a4" dark="#0a6c60" light="#c8f4ea" letter="W" />, <Flask c="#9c18a4" dark="#5c0868" light="#d890dc" letter="V" />,
  <Abc />, <FormLink />, <DInf />, <Book />, <Handshake />, <Notes />, <CardBox />, <Microscope />,
  <BindersOut />, <Binders />, <PageArrow />, <PageArrow right />, <Question />, <Feather />,
  <Grid n="1" />, <Grid n="2" />, <Grid n="3" />, <Grid />,
];
const rightTools = [<NumFolder n="1" />, <NumFolder n="2" />, <NumFolder n="3" />, <MpDoc />, <Bell />, <Smiley />];
const pictures = [<Cabinet />, <Diagnose />, <FeeCatalog />, <Form />, <Printer />, <InsuranceCard />];

const menu: [string, number][] = [
  ["Kartei", 44], ["Patientendaten", 94], ["Daten anzeigen", 95], ["Pflege der Hilfsdaten", 124],
  ["Abrechnungen/Auswertungen", 175], ["GUSbox", 55], ["Extras", 44], ["?", 20],
];

type FieldDef = { label: string; w: number; value?: string; bg?: string; ml?: number; ls?: number; pl?: number; lls?: number };
const fields: FieldDef[] = [
  { label: "Name", w: 186, bg: PURPLE },
  { label: "Geburtsdatum", w: 74, value: "14.04.1930", ls: 0.75, lls: -0.5 },
  { label: "Alter", w: 106, value: "89 Jahre", pl: 2, ls: 0.4 },
  { label: "Status", w: 58, bg: PURPLE },
  { label: "Kasse: 72101", w: 127, value: "AOK Nordost", pl: 1, ls: 0.05 },
  { label: "Kassenart", w: 67, value: "R  / AOK", pl: 1 },
  { label: "GO", w: 57, value: "BMÄ" },
  { label: "Beh.-Scheine", w: 69, value: "-KVK-K", pl: 1, ls: 0, lls: -0.2 },
  { label: "gf", w: 23, pl: 7 },
  { label: "Straße", w: 153, bg: PURPLE, ml: 1 },
];

export default function App() {
  return (
    <>
      <Global />
      <Window>
        <TitleBar>
          <AppIcon><Umbrella /></AppIcon>
          <TitleText $w={93}>* QUINCY WIN *</TitleText>
          <TitleText $w={36}>SQL+</TitleText>
          <TitleText $w={93}>Arbeitsplatz: D</TitleText>
          <TitleRedact />
          <TitleText>Arzt: LW_F</TitleText>
          <WindowButtons>
            <WindowButton $w={28}>
              <Svg w={14} h={14}><rect x="1.500" y="6.500" width="11" height="4" rx="1" fill="#fff" stroke="#435a68" /></Svg>
            </WindowButton>
            <WindowButton $w={27}>
              <Svg w={14} h={14}><path d="M1.500 2.500h11v8h-11zM5.500 5.500v2h3v-2z" fill="#fff" fillRule="evenodd" stroke="#435a68" /></Svg>
            </WindowButton>
            <WindowButton $w={47}>
              <Svg w={14} h={14}><path d="M3.500 3l7 8M10.500 3l-7 8" stroke="#435a68" strokeWidth="4.500" /><path d="M3.500 3l7 8M10.500 3l-7 8" stroke="#fff" strokeWidth="2.500" /></Svg>
            </WindowButton>
          </WindowButtons>
        </TitleBar>
        <MenuBar>
          {menu.map(([t, w]) => <MenuItem key={t} $w={w}>{t}</MenuItem>)}
        </MenuBar>

        <PatientHeader>
          <PatientMain>
            <FieldRow $gap={3}>
              {fields.map((f) => (
                <FieldGroup key={f.label} $w={f.w} $ml={f.ml}>
                  <Label $pl={f.pl} $ls={f.lls}>{f.label}{f.label === "Name" && <Sex>f</Sex>}</Label>
                  <Box $bg={f.bg} $ls={f.ls}>{f.value}</Box>
                </FieldGroup>
              ))}
            </FieldRow>
            <FieldRow $gap={4}>
              <FieldGroup $w={185}><Label $h={20}>Bemerkungen</Label><Box /></FieldGroup>
              <FieldGroup $w={21}><Label $h={20}>K1</Label><Box /></FieldGroup>
              <FieldGroup $w={21} $ml={1}><Label $h={20}>K2</Label><Box /></FieldGroup>
              <FieldGroup $w={551}>
                <PhoneRow>
                  <FieldGroup $w={192}><Label $h={20} $pl={1}>wichtige Information</Label></FieldGroup>
                  <FieldGroup $w={24}><Label $h={20} $up={2}>Tel:</Label></FieldGroup>
                  <InlineRedact />
                  <FieldGroup $w={95} $ml={91}><Label $h={20} $up={2} $ls={-0.5}>Patientennummer:</Label></FieldGroup>
                  <PatientNumber>131665</PatientNumber>
                </PhoneRow>
                <Box $bg="#ffff80" $fg="#6b6b60" $ls={-0.1}>Allerg:  Penicillin</Box>
              </FieldGroup>
              <FieldGroup $w={153}><Label $h={20}>Ort</Label><Box $ls={0.3}>13351 Berlin</Box></FieldGroup>
            </FieldRow>
          </PatientMain>
          <FieldGroup $w={315}>
            <Label $up={2} $ls={-0.2}>Termine</Label>
            <Box $h={60} />
          </FieldGroup>
        </PatientHeader>

        <StatusStrip>
          <Flag $w={198} $h={13} $mt={2} $bg="#ff8080" $ls={-0.43}>letzte Krebsfrüherk.&nbsp; 01.10.18 (iFOBT fehlt)</Flag>
          <Flag $w={40} $ml={403} $h={13} $mt={2} $bg="#00ff00" $bold>2 Min</Flag>
          <Checks><Check $w={43} /><Check $w={42} /><Check $w={40} /><Check $w={40} /><Check $w={8} /></Checks>
          <Flag $w={158} $h={15} $mt={0} $bg="#00ff00" $ls={-0.42}>Datenschutzerklärung OK</Flag>
        </StatusStrip>

        <Workspace>
          <LeftTools>{leftTools.map((t, i) => <Tool key={i}>{t}</Tool>)}</LeftTools>
          <Center>
            <Banner><Bullet>•</Bullet>DSGVO Datenschutzerklärung liegt vor</Banner>
            <TableFrame>
              <Table>
                <HeadRow>
                  {["Datum", "K", "", "Diagnosen / Befunde / etc.", "Leistungen"].map((h, i) => <HeadCell key={i}>{h}</HeadCell>)}
                </HeadRow>
                <TableBody />
                <TableFoot />
              </Table>
              <ScrollBar>
                <ScrollPiece $h={16}><Arrow /></ScrollPiece>
                <ScrollPiece $h={51} $mt="auto" />
                <ScrollPiece $h={16}><Arrow down /></ScrollPiece>
              </ScrollBar>
            </TableFrame>
            <FootRow $h={24}>
              <PlainButton>Impfungen verwalten</PlainButton>
              <Well />
            </FootRow>
            <FootRow $h={24}>
              <SearchCell>Patienten suchen</SearchCell>
              <DateCell>31.10.19<DropArrow><Arrow down /></DropArrow></DateCell>
              <Well />
            </FootRow>
          </Center>
          <RightTools>{rightTools.map((t, i) => <Tool key={i} $right>{t}</Tool>)}</RightTools>
        </Workspace>

        <PictureBar>
          {pictures.map((p, i) => <PictureButton key={i} $ml={i === 1 || i === 5 ? 1 : 0} $drop={i === 5}>{p}</PictureButton>)}
        </PictureBar>

        <TaskBar>
          <StartSlot><StartOrb /></StartSlot>
          <TaskButton $w={59}><Explorer /></TaskButton>
          <TaskButton $w={60}><BlueApp /></TaskButton>
          <TaskButton $w={60}><Chrome /></TaskButton>
          <TaskButton $w={61} $flat><Firefox /></TaskButton>
          <TaskButton $w={59} $flat><Ie /></TaskButton>
          <TaskButton $w={59} $active><BigUmbrella /></TaskButton>
          <TaskButton $w={60}><RemoteApp /></TaskButton>
          <TaskButton $w={60}><Chrome /></TaskButton>
          <Tray>
            <TrayText $mt={8} $w={51}>DE</TrayText>
            <Svg w={119} h={15}>
              <path d="M1 12h16v3H1z" fill="#e01010" />
              <path d="M26 14l3-2 4 3M36 13h7M57 11v4M54 13h6M75 12l2-1h6v4M80 12v3" stroke="#fff" fill="none" strokeWidth="1.500" />
            </Svg>
            <TrayText $mt={4} $w={53}>14:02</TrayText>
            <ShowDesktop />
          </Tray>
        </TaskBar>

        <SupportTab>
          <Svg w={26} h={53}>
            <path d="M26 .5H6Q.5 .5 .5 6V33Q.5 37 4 39L26 52" fill="#fff" stroke="#aaa" />
            <path d="M4 6h20v20H4z" fill="#1090f0" /><circle cx="14" cy="16" r="9" fill="#fff" />
            <path d="M6 16l5-3.500v2.500h6v-2.500l5 3.500-5 3.500V17h-6v2.500z" fill="#3088e0" />
          </Svg>
        </SupportTab>
      </Window>
    </>
  );
}
